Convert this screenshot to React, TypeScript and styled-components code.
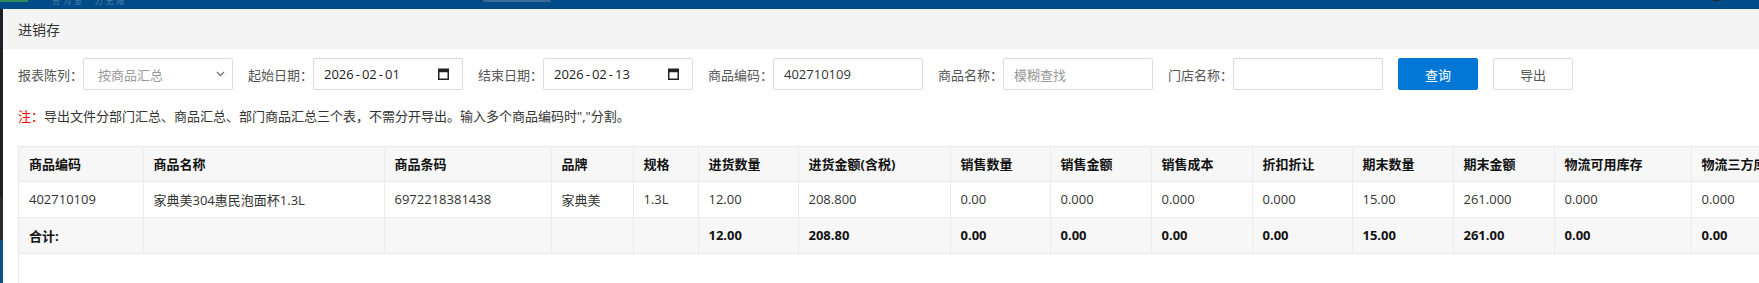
import React from "react";
import styled, { createGlobalStyle } from "styled-components";

const Global = createGlobalStyle`
  html, body { margin: 0; padding: 0; background: #fff; overflow: hidden; }
  body { font-family: "Open Sans", "Noto Sans CJK SC", sans-serif; }
  * { box-sizing: border-box; }
`;

const Page = styled.div`
  width: 1759px;
  height: 283px;
  display: flex;
  flex-direction: column;
  overflow: hidden;
`;

const TopBar = styled.div`
  height: 9px;
  flex-shrink: 0;
  background: #014b88;
  display: flex;
  align-items: flex-start;
  overflow: hidden;
`;

const GreenMark = styled.div`
  width: 28px;
  height: 2px;
  background: #2f8a5c;
`;

const Slogan = styled.span`
  width: 90px;
  margin-left: 24px;
  margin-top: -4px;
  font-size: 8px;
  line-height: 9px;
  letter-spacing: 3px;
  color: rgba(170, 190, 215, 0.5);
  white-space: pre;
  font-family: "Noto Sans CJK SC", sans-serif;
`;

const TabStub = styled.div`
  width: 68px;
  height: 2px;
  margin-left: 341px;
  background: #3b6a9a;
  border-radius: 0 0 3px 3px;
`;

const CornerMark = styled.div`
  width: 7px;
  height: 1px;
  margin-left: 1162px;
  background: #2a2a2a;
`;

const Body = styled.div`
  flex: 1;
  display: flex;
  min-height: 0;
`;

const LeftStrip = styled.div`
  width: 3px;
  flex-shrink: 0;
  background: linear-gradient(
    to bottom,
    #1d2126 0px,
    #1d2126 188px,
    #292d32 188px,
    #292d32 231px,
    #0f4f86 231px
  );
`;

const Panel = styled.div`
  flex: 1;
  display: flex;
  flex-direction: column;
  background: #fff;
  min-width: 0;
`;

const Header = styled.div`
  height: 40px;
  flex-shrink: 0;
  background: #f4f4f4;
  padding-left: 15px;
  display: flex;
  align-items: center;
  font-size: 14px;
  color: #333;
`;

const Content = styled.div`
  padding: 9px 0 0 15px;
  display: flex;
  flex-direction: column;
`;

const FilterRow = styled.div`
  display: flex;
  align-items: center;
  gap: 15px;
  height: 32px;
`;

const Group = styled.div`
  display: flex;
  align-items: center;
`;

const Label = styled.span`
  width: 65px;
  font-size: 13px;
  color: #555;
  white-space: nowrap;
`;

const Field = styled.div<{ $tone?: "value" | "placeholder" | "date"; $padRight?: number }>`
  width: 150px;
  height: 32px;
  border: 1px solid #dcdcdc;
  border-radius: 2px;
  padding: 0 ${(p) => p.$padRight ?? 10}px 0 10px;
  display: flex;
  align-items: center;
  justify-content: space-between;
  font-size: 13px;
  white-space: nowrap;
  color: ${(p) =>
    p.$tone === "placeholder" ? "#999" : p.$tone === "date" ? "#222" : "#333"};
`;

const SelectText = styled.span`
  padding-left: 4px;
`;

const DateText = styled.span`
  display: flex;
  align-items: center;
`;

const Dash = styled.span`
  margin: 0 2px;
`;

const Button = styled.button<{ $primary?: boolean }>`
  width: 80px;
  height: 32px;
  border-radius: 2px;
  font-family: inherit;
  font-size: 13px;
  cursor: pointer;
  border: 1px solid ${(p) => (p.$primary ? "#0277d6" : "#dcdcdc")};
  background: ${(p) => (p.$primary ? "#0277d6" : "#fff")};
  color: ${(p) => (p.$primary ? "#fff" : "#555")};
`;

const Note = styled.div`
  margin-top: 16px;
  font-size: 13px;
  line-height: 20px;
  color: #333;
  white-space: nowrap;
`;

const Red = styled.span`
  color: #f00;
`;

const TableWrap = styled.div`
  margin-top: 20px;
  height: 200px;
  border-left: 1px solid #e8e8e8;
  border-top: 1px solid #e8e8e8;
  overflow: hidden;
`;

const Table = styled.table`
  border-collapse: collapse;
  table-layout: fixed;
  width: 1809px;
  font-size: 13px;
`;

const Th = styled.th`
  height: 34px;
  padding: 0 10px;
  text-align: left;
  font-weight: 700;
  color: #111;
  background: #f7f7f7;
  border-right: 1px solid #ebebeb;
  border-bottom: 1px solid #ebebeb;
  white-space: nowrap;
  overflow: hidden;
`;

const Td = styled.td<{ $total?: boolean }>`
  height: 36px;
  padding: 0 10px;
  text-align: left;
  white-space: nowrap;
  overflow: hidden;
  font-weight: ${(p) => (p.$total ? 700 : 400)};
  color: ${(p) => (p.$total ? "#111" : "#333")};
  background: ${(p) => (p.$total ? "#f7f7f7" : "#fff")};
  border-right: 1px solid #ebebeb;
  border-bottom: 1px solid #ebebeb;
`;

const Chevron = () => (
  <svg width="9" height="6" viewBox="0 0 9 6">
    <polyline points="1,1 4.5,4.5 8,1" fill="none" stroke="#777" strokeWidth="1.4" />
  </svg>
);

const CalendarIcon = () => (
  <svg width="11" height="12" viewBox="0 0 11 12">
    <rect x="0.75" y="1.25" width="9.5" height="10" fill="none" stroke="#222" strokeWidth="1.5" />
    <rect x="0.75" y="1.25" width="9.5" height="3" fill="#222" />
  </svg>
);

const DateValue = ({ v }: { v: string }) => {
  const [y, m, d] = v.split("-");
  return (
    <DateText>
      {y}
      <Dash>-</Dash>
      {m}
      <Dash>-</Dash>
      {d}
    </DateText>
  );
};

const columns: { title: string; width: number }[] = [
  { title: "商品编码", width: 124 },
  { title: "商品名称", width: 241 },
  { title: "商品条码", width: 167 },
  { title: "品牌", width: 82 },
  { title: "规格", width: 65 },
  { title: "进货数量", width: 100 },
  { title: "进货金额(含税)", width: 152 },
  { title: "销售数量", width: 100 },
  { title: "销售金额", width: 101 },
  { title: "销售成本", width: 101 },
  { title: "折扣折让", width: 100 },
  { title: "期末数量", width: 101 },
  { title: "期末金额", width: 101 },
  { title: "物流可用库存", width: 137 },
  { title: "物流三方库存", width: 137 },
];

const row = [
  "402710109",
  "家典美304惠民泡面杯1.3L",
  "6972218381438",
  "家典美",
  "1.3L",
  "12.00",
  "208.800",
  "0.00",
  "0.000",
  "0.000",
  "0.000",
  "15.00",
  "261.000",
  "0.000",
  "0.000",
];

const totals = [
  "合计:",
  "",
  "",
  "",
  "",
  "12.00",
  "208.80",
  "0.00",
  "0.00",
  "0.00",
  "0.00",
  "15.00",
  "261.00",
  "0.00",
  "0.00",
];

export default function App() {
  return (
    <>
      <Global />
      <Page>
        <TopBar>
          <GreenMark />
          <Slogan>合为里  力无限</Slogan>
          <TabStub />
          <CornerMark />
        </TopBar>
        <Body>
          <LeftStrip />
          <Panel>
            <Header>进销存</Header>
            <Content>
              <FilterRow>
                <Group>
                  <Label>报表陈列：</Label>
                  <Field $tone="placeholder" $padRight={7}>
                    <SelectText>按商品汇总</SelectText>
                    <Chevron />
                  </Field>
                </Group>
                <Group>
                  <Label>起始日期：</Label>
                  <Field $tone="date" $padRight={13}>
                    <DateValue v="2026-02-01" />
                    <CalendarIcon />
                  </Field>
                </Group>
                <Group>
                  <Label>结束日期：</Label>
                  <Field $tone="date" $padRight={13}>
                    <DateValue v="2026-02-13" />
                    <CalendarIcon />
                  </Field>
                </Group>
                <Group>
                  <Label>商品编码：</Label>
                  <Field>402710109</Field>
                </Group>
                <Group>
                  <Label>商品名称：</Label>
                  <Field $tone="placeholder">模糊查找</Field>
                </Group>
                <Group>
                  <Label>门店名称：</Label>
                  <Field />
                </Group>
                <Button $primary>查询</Button>
                <Button>导出</Button>
              </FilterRow>
              <Note>
                <Red>注：</Red>
                导出文件分部门汇总、商品汇总、部门商品汇总三个表，不需分开导出。输入多个商品编码时","分割。
              </Note>
              <TableWrap>
                <Table>
                  <colgroup>
                    {columns.map((c) => (
                      <col key={c.title} style={{ width: c.width }} />
                    ))}
                  </colgroup>
                  <thead>
                    <tr>
                      {columns.map((c) => (
                        <Th key={c.title}>{c.title}</Th>
                      ))}
                    </tr>
                  </thead>
                  <tbody>
                    <tr>
                      {row.map((v, i) => (
                        <Td key={i}>{v}</Td>
                      ))}
                    </tr>
                    <tr>
                      {totals.map((v, i) => (
                        <Td key={i} $total>
                          {v}
                        </Td>
                      ))}
                    </tr>
                  </tbody>
                </Table>
              </TableWrap>
            </Content>
          </Panel>
        </Body>
      </Page>
    </>
  );
}
